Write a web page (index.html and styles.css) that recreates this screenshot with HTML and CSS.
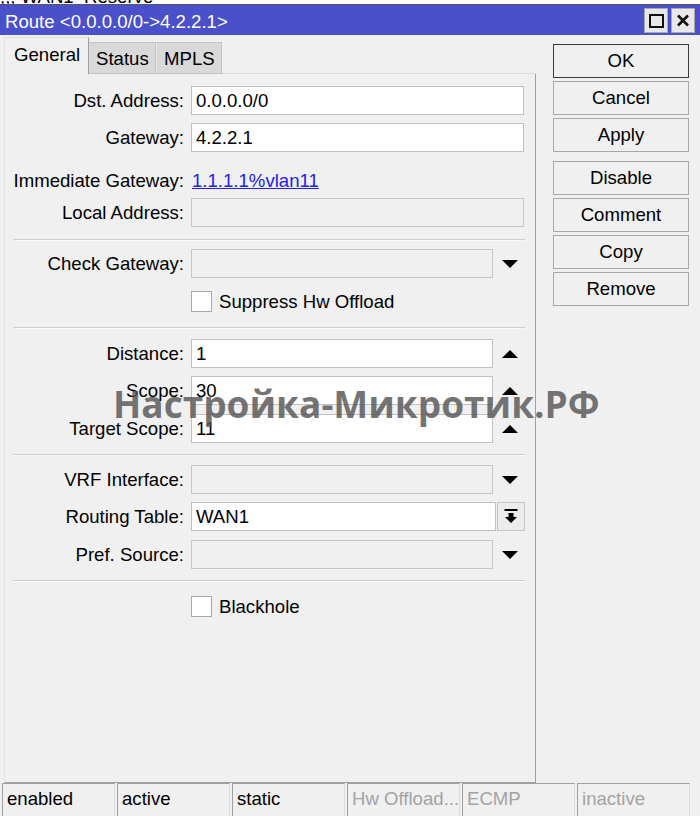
FILE: index.html
```html
<!DOCTYPE html>
<html lang="ru">
<head>
<meta charset="utf-8">
<title>Route</title>
<link rel="stylesheet" href="styles.css">
</head>
<body>
<div class="topstrip"><span>;;; WAN1_Reserve</span></div>
<div class="window">
  <div class="titlebar">
    <div class="title">Route &lt;0.0.0.0/0-&gt;4.2.2.1&gt;</div>
    <div class="winbtns">
      <div class="winbtn"><svg width="15" height="14" viewBox="0 0 15 14"><rect x="1" y="1" width="13" height="12" fill="none" stroke="#111" stroke-width="2"/></svg></div>
      <div class="winbtn"><svg width="14" height="13" viewBox="0 0 14 13"><path d="M2 1.5 L12 11.5 M12 1.5 L2 11.5" stroke="#111" stroke-width="2.6" fill="none"/></svg></div>
    </div>
  </div>
  <div class="main">
    <div class="leftcol">
      <div class="tabs">
        <div class="tab active">General</div>
        <div class="tab">Status</div>
        <div class="tab">MPLS</div>
        <div class="tabfill"></div>
      </div>
      <div class="panel">
        <div class="row r-dst">
          <div class="lbl">Dst. Address:</div>
          <div class="field full">0.0.0.0/0</div>
        </div>
        <div class="row r-gw">
          <div class="lbl">Gateway:</div>
          <div class="field full">4.2.2.1</div>
        </div>
        <div class="row r-imm">
          <div class="lbl">Immediate Gateway:</div>
          <a class="link">1.1.1.1%vlan11</a>
        </div>
        <div class="row r-local">
          <div class="lbl">Local Address:</div>
          <div class="field full dis"></div>
        </div>
        <div class="sep s1"></div>
        <div class="row r-check">
          <div class="lbl">Check Gateway:</div>
          <div class="field short dis"></div>
          <svg class="arrow" width="16" height="8" viewBox="0 0 16 8"><polygon points="0,0 16,0 8,8" fill="#000"/></svg>
        </div>
        <div class="cbrow r-supp">
          <div class="cb"></div><span>Suppress Hw Offload</span>
        </div>
        <div class="sep s2"></div>
        <div class="row r-dist">
          <div class="lbl">Distance:</div>
          <div class="field short">1</div>
          <svg class="arrow" width="16" height="8" viewBox="0 0 16 8"><polygon points="0,8 16,8 8,0" fill="#000"/></svg>
        </div>
        <div class="row r-scope">
          <div class="lbl">Scope:</div>
          <div class="field short">30</div>
          <svg class="arrow" width="16" height="8" viewBox="0 0 16 8"><polygon points="0,8 16,8 8,0" fill="#000"/></svg>
        </div>
        <div class="row r-tscope">
          <div class="lbl">Target Scope:</div>
          <div class="field short">11</div>
          <svg class="arrow" width="16" height="8" viewBox="0 0 16 8"><polygon points="0,8 16,8 8,0" fill="#000"/></svg>
        </div>
        <div class="sep s3"></div>
        <div class="row r-vrf">
          <div class="lbl">VRF Interface:</div>
          <div class="field short dis"></div>
          <svg class="arrow" width="16" height="8" viewBox="0 0 16 8"><polygon points="0,0 16,0 8,8" fill="#000"/></svg>
        </div>
        <div class="row r-rt">
          <div class="lbl">Routing Table:</div>
          <div class="field rt">WAN1</div>
          <div class="rtbtn"><svg width="14" height="15" viewBox="0 0 14 15"><rect x="0.5" y="0" width="13" height="2" fill="#000"/><polygon points="4.5,4 9.5,4 9.5,8 13,8 7,14 1,8 4.5,8" fill="#000"/></svg></div>
        </div>
        <div class="row r-pref">
          <div class="lbl">Pref. Source:</div>
          <div class="field short dis"></div>
          <svg class="arrow" width="16" height="8" viewBox="0 0 16 8"><polygon points="0,0 16,0 8,8" fill="#000"/></svg>
        </div>
        <div class="sep s4"></div>
        <div class="cbrow r-bh">
          <div class="cb"></div><span>Blackhole</span>
        </div>
      </div>
    </div>
    <div class="buttons">
      <div class="btn default">OK</div>
      <div class="btn">Cancel</div>
      <div class="btn">Apply</div>
      <div class="btn gap">Disable</div>
      <div class="btn">Comment</div>
      <div class="btn">Copy</div>
      <div class="btn">Remove</div>
    </div>
  </div>
  <div class="statusbar">
    <div class="cell">enabled</div>
    <div class="cell">active</div>
    <div class="cell">static</div>
    <div class="cell off">Hw Offload...</div>
    <div class="cell off">ECMP</div>
    <div class="cell off">inactive</div>
  </div>
  <div class="watermark">Настройка-Микротик.РФ</div>
</div>
</body>
</html>
```
FILE: styles.css
```css
* { box-sizing: border-box; }
html, body { margin: 0; padding: 0; }
body {
  width: 700px;
  height: 816px;
  overflow: hidden;
  background: #f0f0f0;
  font-family: "Liberation Sans", Arial, sans-serif;
  font-size: 18.6px;
  color: #000;
}
.topstrip {
  height: 4px;
  background: #fff;
  overflow: hidden;
}
.topstrip span {
  display: block;
  margin-top: -13px;
  line-height: 20px;
  white-space: nowrap;
}
.window { position: relative; }
.titlebar {
  height: 31px;
  border-top: 1px solid #55556a;
  background: #4a4fca;
  display: flex;
  align-items: flex-start;
}
.title {
  flex: 1;
  color: #fff;
  padding-left: 5px;
  padding-top: 3px;
  line-height: 28px;
  white-space: nowrap;
}
.winbtns {
  display: flex;
  gap: 3px;
  padding-top: 3px;
  padding-right: 5px;
}
.winbtn {
  width: 24px;
  height: 25px;
  background: #e8e8e8;
  border: 1px solid #a8a8a8;
  display: flex;
  align-items: center;
  justify-content: center;
}
.main {
  display: flex;
  height: 748px;
}
.leftcol {
  margin-left: 4px;
  width: 532px;
  display: flex;
  flex-direction: column;
}
.tabs {
  height: 39px;
  display: flex;
  align-items: flex-end;
}
.tab {
  height: 32px;
  padding: 0 7px;
  background: #d9d9d9;
  border: 1px solid #c4c4c4;
  border-left-color: #e6e6e6;
  line-height: 32px;
  white-space: nowrap;
}
.tab:nth-child(2) { width: 67px; border-left: none; padding-left: 7px; }
.tab:nth-child(3) { width: 66px; }
.tab.active {
  width: 85px;
  height: 37px;
  background: #f0f0f0;
  border: 1px solid #e2e2e2;
  border-right: 1px solid #a0a0a0;
  border-bottom: none;
  padding-left: 9px;
  line-height: 34px;
}
.tabfill {
  flex: 1;
  height: 1px;
  background: #dadada;
}
.panel {
  flex: 1;
  border-left: 1px solid #e4e4e4;
  border-right: 1px solid #a0a0a0;
  border-bottom: 1px solid #a0a0a0;
  padding-top: 12px;
  display: flex;
  flex-direction: column;
}
.row {
  display: flex;
  align-items: center;
  height: 29px;
  flex: none;
}
.lbl {
  width: 179px;
  margin-right: 7px;
  text-align: right;
  white-space: nowrap;
}
.field {
  height: 29px;
  background: #fff;
  border: 1px solid #c0c0c0;
  padding-left: 4px;
  line-height: 27px;
  white-space: nowrap;
}
.field.full { width: 333px; }
.field.short { width: 302px; }
.field.rt { width: 305px; }
.field.dis { background: #f0f0f0; border-color: #c6c6c6; }
.arrow { margin-left: 9px; flex: none; }
.rtbtn {
  width: 28px;
  height: 29px;
  margin-left: 1px;
  border: 1px solid #c6c6c6;
  background: #ececec;
  display: flex;
  align-items: center;
  justify-content: center;
}
.link {
  color: #2222e6;
  text-decoration: underline;
  padding-left: 1px;
}
.sep {
  margin-left: 8px;
  width: 512px;
  height: 2px;
  border-top: 1px solid #cdcdcd;
  border-bottom: 1px solid #f8f8f8;
  flex: none;
}
.cbrow {
  display: flex;
  align-items: center;
  height: 21px;
  padding-left: 186px;
  flex: none;
}
.cb {
  width: 21px;
  height: 21px;
  background: #fff;
  border: 1px solid #a8a8a8;
  margin-right: 7px;
}
.r-gw { margin-top: 8px; }
.r-imm { margin-top: 14px; }
.r-local { margin-top: 3px; }
.s1 { margin-top: 12px; }
.r-check { margin-top: 8px; }
.r-supp { margin-top: 13px; }
.s2 { margin-top: 15px; }
.r-dist { margin-top: 10px; }
.r-scope { margin-top: 8px; }
.r-tscope { margin-top: 9px; }
.s3 { margin-top: 11px; }
.r-vrf { margin-top: 9px; }
.r-rt { margin-top: 8px; }
.r-pref { margin-top: 9px; }
.s4 { margin-top: 11px; }
.r-bh { margin-top: 14px; }
.buttons {
  margin-left: 17px;
  width: 136px;
  padding-top: 9px;
  display: flex;
  flex-direction: column;
  gap: 3px;
}
.btn {
  height: 34px;
  border: 1px solid #a8a8a8;
  background: #f0f0f0;
  text-align: center;
  line-height: 32px;
}
.btn.default { border-color: #3a3a3a; }
.btn.gap { margin-top: 6px; }
.statusbar {
  height: 33px;
  display: flex;
  gap: 2px;
  padding-left: 2px;
}
.cell {
  width: 113px;
  height: 33px;
  border-top: 1px solid #a0a0a0;
  border-left: 1px solid #a0a0a0;
  border-right: 1px solid #dcdcdc;
  padding-left: 4px;
  line-height: 29px;
  white-space: nowrap;
  overflow: hidden;
}
.cell.off { color: #a3a3a3; }
.watermark {
  position: absolute;
  left: 113px;
  top: 380px;
  font-family: "Open Sans", "Noto Sans", sans-serif;
  font-weight: 700;
  font-size: 37px;
  line-height: 40px;
  color: rgba(85, 85, 85, 0.82);
  white-space: nowrap;
}
```
